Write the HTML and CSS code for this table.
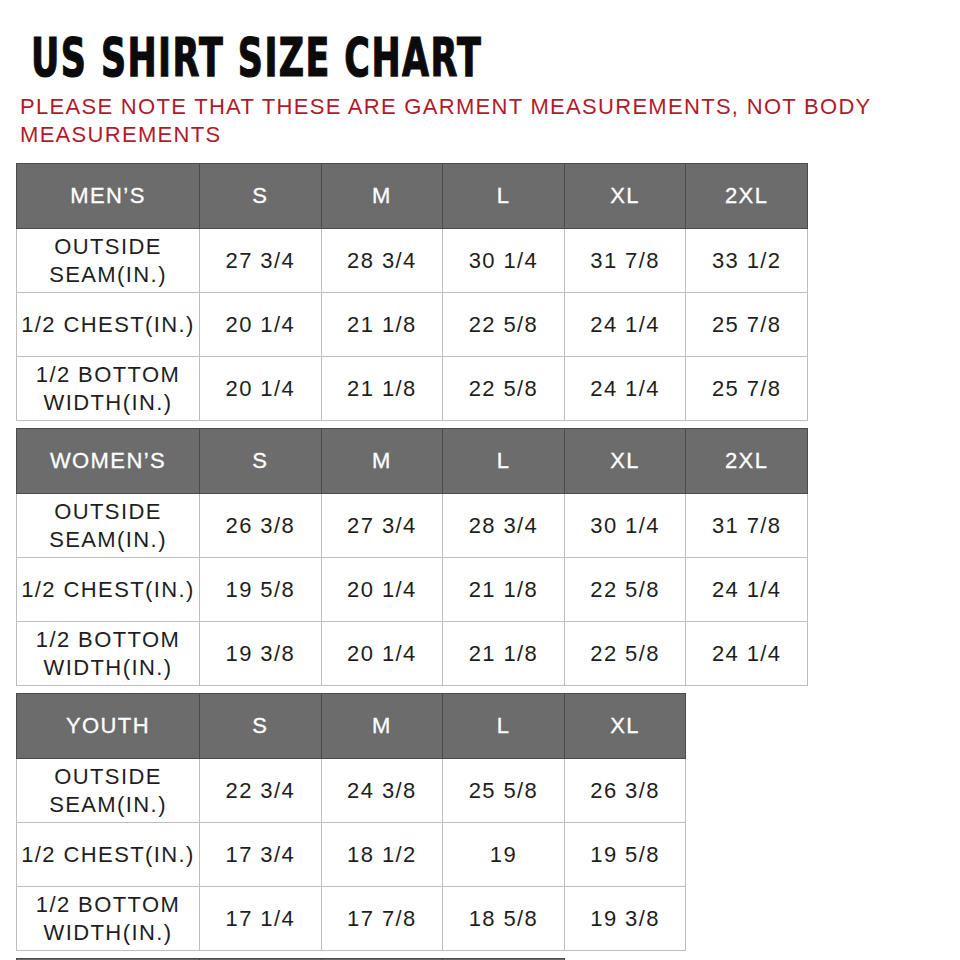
FILE: index.html
```html
<!DOCTYPE html>
<html lang="en">
<head>
<meta charset="utf-8">
<title>US Shirt Size Chart</title>
<link rel="stylesheet" href="styles.css">
</head>
<body>
<div class="page">
  <h1 class="title"><span>US SHIRT SIZE CHART</span></h1>
  <p class="note">PLEASE NOTE THAT THESE ARE GARMENT MEASUREMENTS, NOT BODY MEASUREMENTS</p>

  <table class="chart">
    <colgroup><col class="c-label"><col class="c-size"><col class="c-size"><col class="c-size"><col class="c-size"><col class="c-size"></colgroup>
    <thead>
      <tr><th>MEN’S</th><th>S</th><th>M</th><th>L</th><th>XL</th><th>2XL</th></tr>
    </thead>
    <tbody>
      <tr><td class="label">OUTSIDE<br>SEAM(IN.)</td><td>27 3/4</td><td>28 3/4</td><td>30 1/4</td><td>31 7/8</td><td>33 1/2</td></tr>
      <tr><td class="label">1/2 CHEST(IN.)</td><td>20 1/4</td><td>21 1/8</td><td>22 5/8</td><td>24 1/4</td><td>25 7/8</td></tr>
      <tr><td class="label">1/2 BOTTOM<br>WIDTH(IN.)</td><td>20 1/4</td><td>21 1/8</td><td>22 5/8</td><td>24 1/4</td><td>25 7/8</td></tr>
    </tbody>
  </table>

  <table class="chart">
    <colgroup><col class="c-label"><col class="c-size"><col class="c-size"><col class="c-size"><col class="c-size"><col class="c-size"></colgroup>
    <thead>
      <tr><th>WOMEN’S</th><th>S</th><th>M</th><th>L</th><th>XL</th><th>2XL</th></tr>
    </thead>
    <tbody>
      <tr><td class="label">OUTSIDE<br>SEAM(IN.)</td><td>26 3/8</td><td>27 3/4</td><td>28 3/4</td><td>30 1/4</td><td>31 7/8</td></tr>
      <tr><td class="label">1/2 CHEST(IN.)</td><td>19 5/8</td><td>20 1/4</td><td>21 1/8</td><td>22 5/8</td><td>24 1/4</td></tr>
      <tr><td class="label">1/2 BOTTOM<br>WIDTH(IN.)</td><td>19 3/8</td><td>20 1/4</td><td>21 1/8</td><td>22 5/8</td><td>24 1/4</td></tr>
    </tbody>
  </table>

  <table class="chart">
    <colgroup><col class="c-label"><col class="c-size"><col class="c-size"><col class="c-size"><col class="c-size"></colgroup>
    <thead>
      <tr><th>YOUTH</th><th>S</th><th>M</th><th>L</th><th>XL</th></tr>
    </thead>
    <tbody>
      <tr><td class="label">OUTSIDE<br>SEAM(IN.)</td><td>22 3/4</td><td>24 3/8</td><td>25 5/8</td><td>26 3/8</td></tr>
      <tr><td class="label">1/2 CHEST(IN.)</td><td>17 3/4</td><td>18 1/2</td><td>19</td><td>19 5/8</td></tr>
      <tr><td class="label">1/2 BOTTOM<br>WIDTH(IN.)</td><td>17 1/4</td><td>17 7/8</td><td>18 5/8</td><td>19 3/8</td></tr>
    </tbody>
  </table>

  <table class="chart">
    <colgroup><col class="c-label"><col class="c-size"><col class="c-size"><col class="c-size"></colgroup>
    <thead>
      <tr><th></th><th></th><th></th><th></th></tr>
    </thead>
  </table>
</div>
</body>
</html>
```

FILE: styles.css
```css
html, body {
  margin: 0;
  padding: 0;
  background: #ffffff;
}

.page {
  padding: 0 0 0 16px;
  font-family: "Liberation Sans", Arial, sans-serif;
}

.title {
  margin: 0;
  padding: 30px 0 0 15px;
  height: 56px;
  font-family: "DejaVu Sans Condensed", "DejaVu Sans", sans-serif;
  font-weight: bold;
  font-size: 54px;
  line-height: 56px;
  color: #0b0b0b;
  white-space: nowrap;
}

.title span {
  display: inline-block;
  transform-origin: left center;
  transform: scaleX(0.718);
  letter-spacing: 2px;
  -webkit-text-stroke: 1.2px #0b0b0b;
}

.note {
  margin: 7px 0 14px 4px;
  width: 900px;
  font-size: 22px;
  line-height: 28px;
  color: #b01a2c;
  letter-spacing: 1.3px;
}

.chart {
  border-collapse: collapse;
  table-layout: fixed;
  margin-bottom: 7px;
  font-size: 22px;
  letter-spacing: 1.4px;
}

.c-label { width: 183px; }
.c-size { width: 121.6px; }

.chart th {
  height: 64px;
  padding: 0;
  background: #6c6c6c;
  color: #ffffff;
  font-weight: normal;
  -webkit-text-stroke: 0.3px #ffffff;
  border: 1px solid #4a4a4a;
  text-align: center;
  vertical-align: middle;
}

.chart td {
  height: 63px;
  padding: 0;
  border: 1px solid #bdbdbd;
  color: #1e1e1e;
  text-align: center;
  vertical-align: middle;
  line-height: 28px;
}

.chart td.label {
  white-space: nowrap;
}
```
